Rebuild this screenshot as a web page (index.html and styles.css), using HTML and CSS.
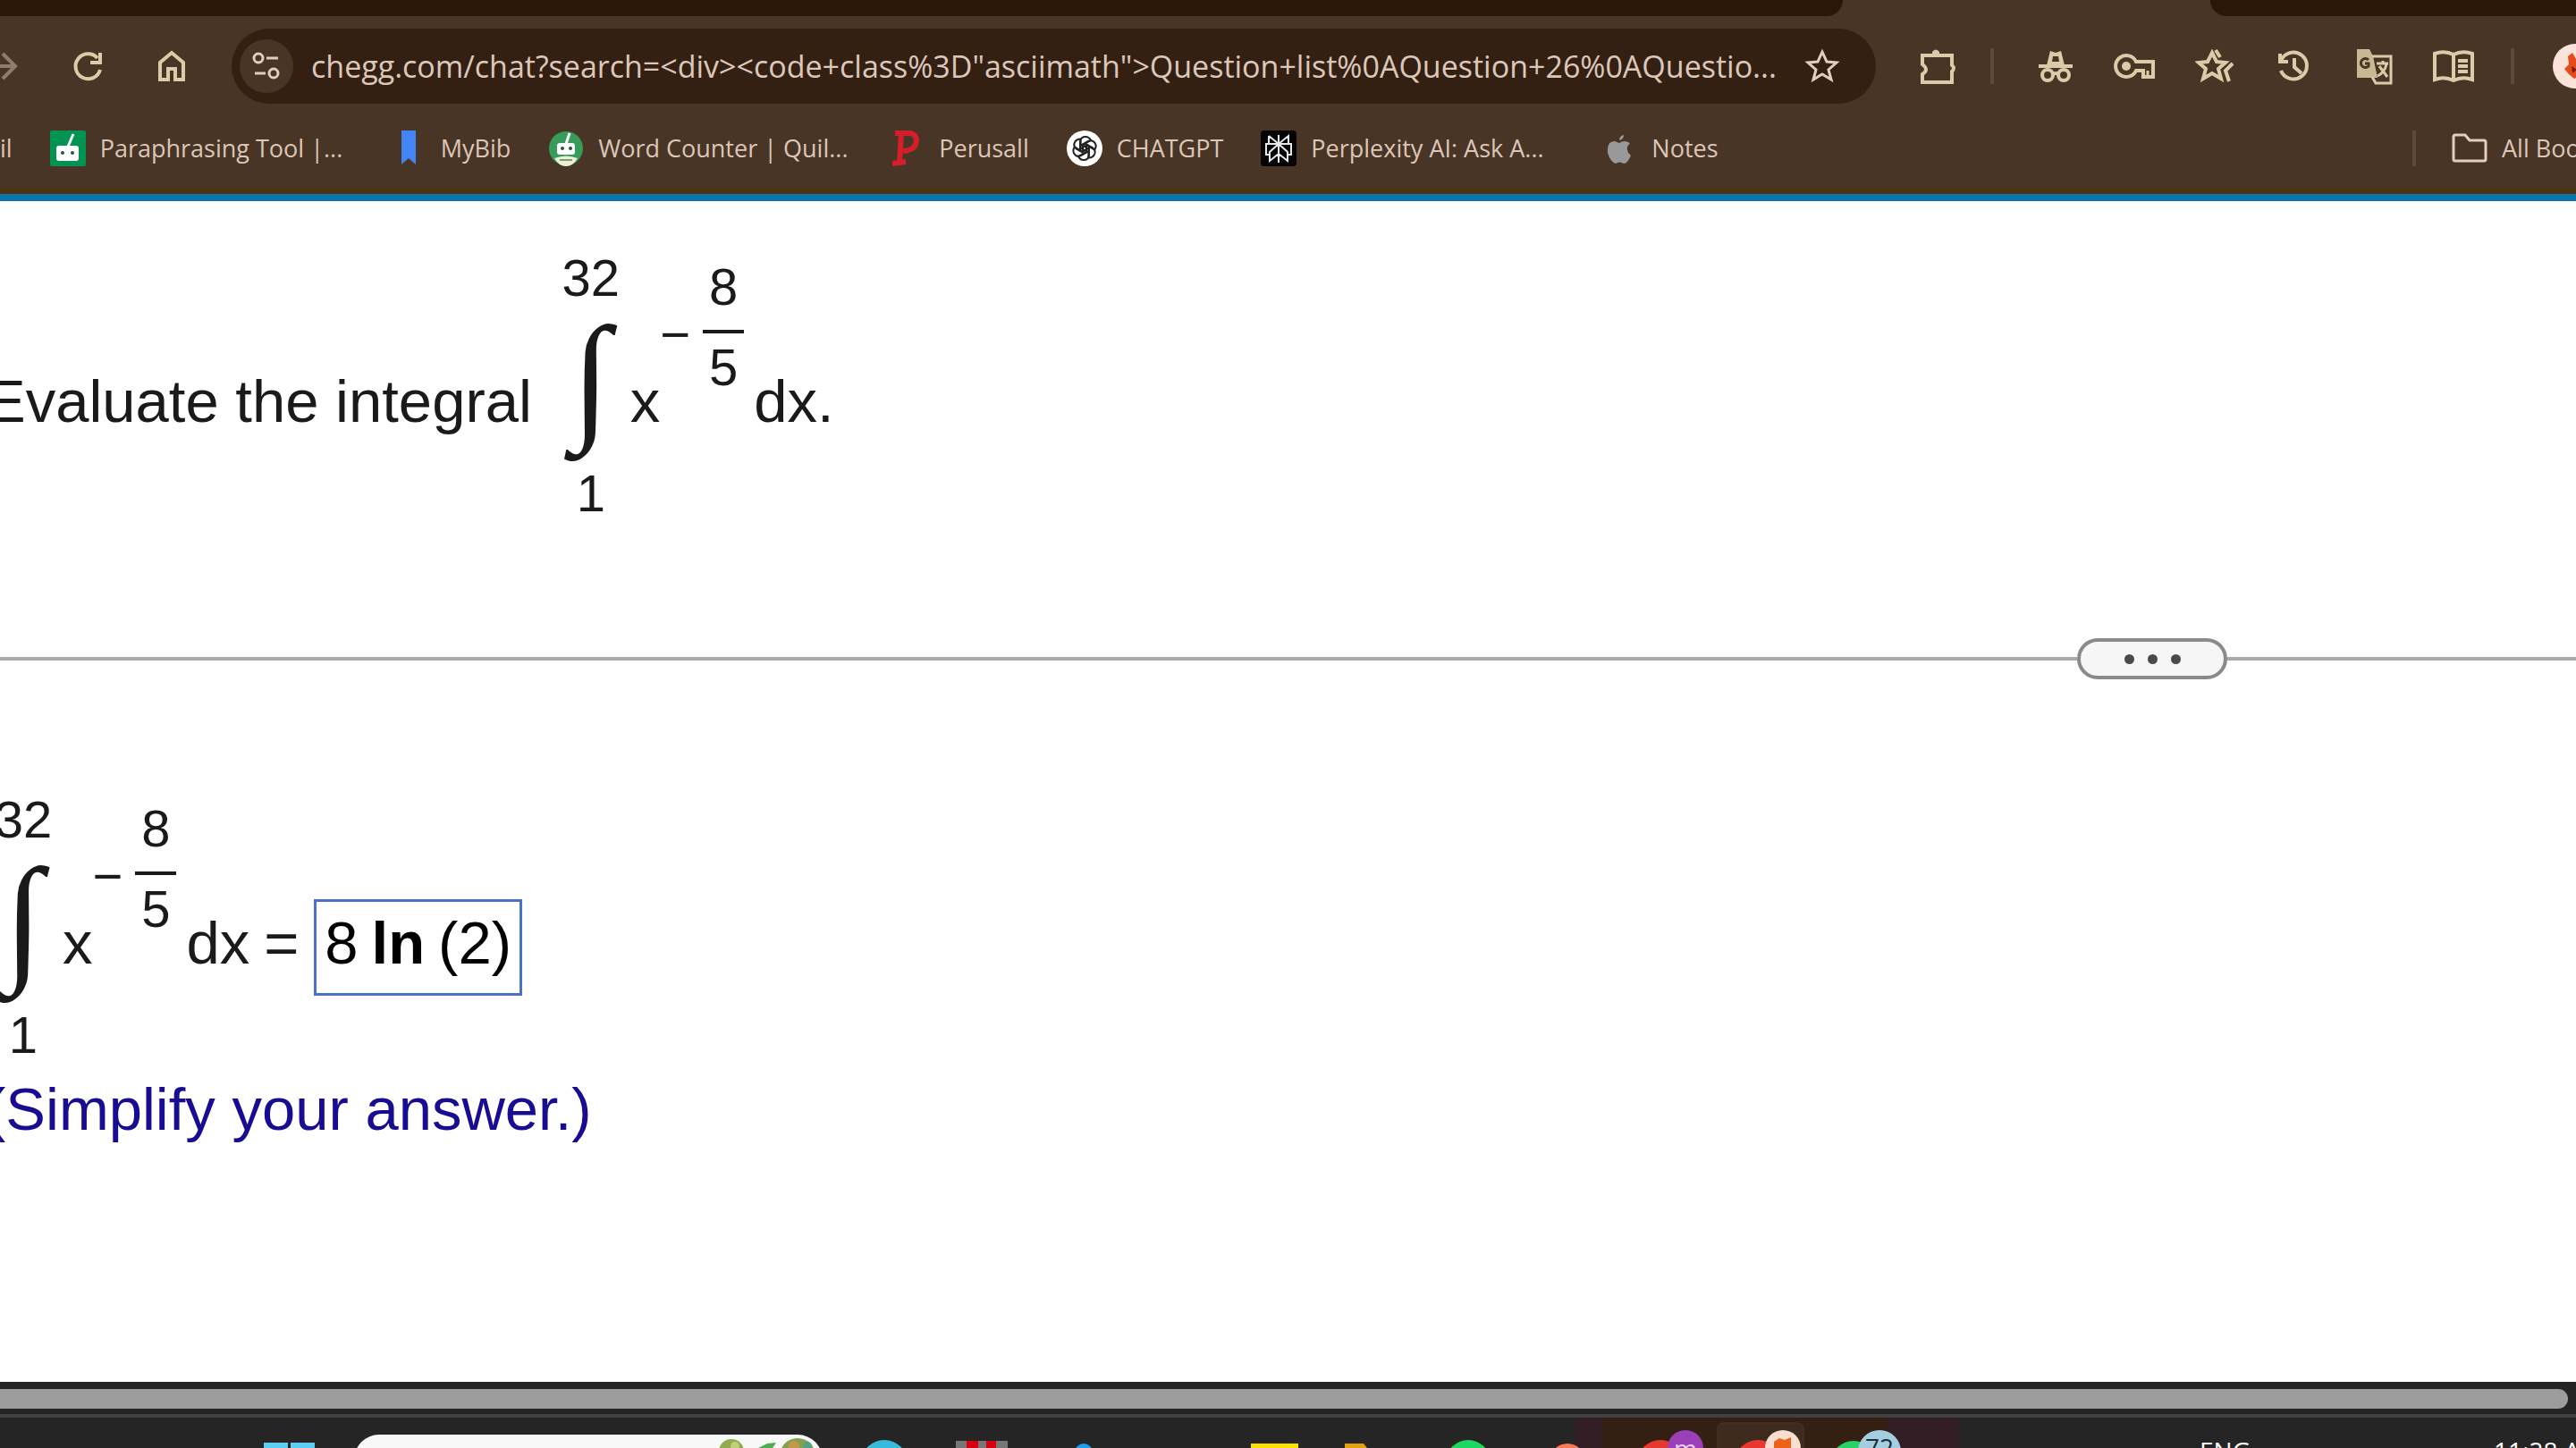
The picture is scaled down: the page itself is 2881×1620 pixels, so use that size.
FILE: index.html
```html
<!DOCTYPE html>
<html lang="en">
<head>
    <meta charset="UTF-8">
    <meta name="viewport" content="width=device-width, initial-scale=1.0">
    <title>Evaluate the integral</title>
    <link rel="stylesheet" href="styles.css">
</head>
<body>
    <header class="browser">
        <div class="tabs">
            <div class="tabs-left"></div>
            <div class="tab-active"></div>
            <div class="tabs-right"></div>
        </div>

        <div class="toolbar">
            <button type="button" class="tool forward" aria-label="Forward">
                <svg width="20" height="40" viewBox="0 0 20 40"><path d="M0 20H17M3 6L17 20L3 34" stroke="#8f7c6d"/></svg>
            </button>
            <button type="button" class="tool nav" aria-label="Reload">
                <svg width="40" height="40" viewBox="0 0 40 40"><path d="M31 11A14 14 0 1 0 34 24M34 5V16H23"/></svg>
            </button>
            <button type="button" class="tool nav" aria-label="Home">
                <svg width="40" height="40" viewBox="0 0 40 40"><path d="M7 35V16L20 5L33 16V35H24V23H16V35Z"/></svg>
            </button>

            <div class="omnibox">
                <button type="button" class="site-info" aria-label="Site information">
                    <svg width="36" height="36" viewBox="0 0 36 36"><circle cx="9" cy="9" r="5"/><path d="M18 9H31M5 26H17"/><circle cx="26" cy="26" r="5"/></svg>
                </button>
                <input type="text" class="url" aria-label="Address" value="chegg.com/chat?search=&lt;div&gt;&lt;code+class%3D&quot;asciimath&quot;&gt;Question+list%0AQuestion+26%0AQuestio...">
                <button type="button" class="bookmark-star" aria-label="Bookmark this page">
                    <svg width="40" height="40" viewBox="0 0 40 40"><path d="M20 4L25 15L36 16L27 24L30 35L20 29L10 35L13 24L4 16L15 15Z"/></svg>
                </button>
            </div>

            <div class="actions">
                <button type="button" class="tool" aria-label="Extensions">
                    <svg width="44" height="44" viewBox="0 0 44 44"><path d="M5 10H38V21Q42 24 38 28V40H5V31Q13 26 5 20Z"/><path d="M16 10V6Q20 1 24 6V10ZM38 19Q45 24 38 30Z" fill="#dccba8" stroke="none"/></svg>
                </button>
                <span class="separator first"></span>
                <button type="button" class="tool" aria-label="Incognito">
                    <svg width="40" height="40" viewBox="0 0 40 40"><path d="M1 20H39" /><path d="M10 19L14 3L20 5L26 3L30 19Z" fill="#dccba8" stroke="none"/><path d="M16 15L17 9H23L24 15Z" fill="#483526" stroke="none"/><circle cx="11" cy="30" r="6"/><circle cx="29" cy="30" r="6"/><path d="M17 29Q20 27 23 29"/></svg>
                </button>
                <button type="button" class="tool" aria-label="Passwords">
                    <svg width="48" height="40" viewBox="0 0 48 40"><path d="M25 15A12 12 0 1 0 25 25H33V32H44V15Z"/><path d="M38 25V33" stroke-width="3"/><circle cx="14" cy="20" r="5" fill="#dccba8" stroke="none"/></svg>
                </button>
                <button type="button" class="tool" aria-label="Bookmarks">
                    <svg width="44" height="44" viewBox="0 0 44 44"><path d="M19 7L24 17L34 18L26 25L29 36L19 30L9 36L12 25L4 18L14 17Z"/><path d="M23 4L28 12M42 19L34 27L38 39"/></svg>
                </button>
                <button type="button" class="tool" aria-label="History">
                    <svg width="40" height="40" viewBox="0 0 40 40"><path d="M4 6V15H13M5 14A15 15 0 1 1 5 25M20 11V21L28 28"/></svg>
                </button>
                <button type="button" class="tool" aria-label="Translate">
                    <svg width="44" height="44" viewBox="0 0 44 44"><path d="M3 3H17L21 11L26 35H3Z" fill="#c8b894" stroke="none"/><path d="M20 11H41V41H24L20 34" stroke-width="3"/><path d="M25 19H38M32 16V19M36 20Q34 29 26 33M28 22L37 34" stroke-width="3"/><path d="M16 15A5 5 0 1 0 16 22V19H12" stroke="#483526" stroke-width="3"/></svg>
                </button>
                <button type="button" class="tool" aria-label="Reading mode">
                    <svg width="48" height="40" viewBox="0 0 48 40"><path d="M24 7Q14 2 3 6V35Q14 31 24 36Q34 31 45 35V6Q34 2 24 7ZM24 7V36M29 14H40M29 20H40M29 26H40"/></svg>
                </button>
                <span class="separator last"></span>
                <span class="avatar">
                    <svg width="50" height="50" viewBox="0 0 50 50"><circle cx="25" cy="25" r="25" fill="#fbe3da" stroke="none"/><path d="M13 28L18 23L17 14L22 10L26 17L36 14L34 34L24 39L18 34Z" fill="#e64b1b" stroke="none"/><path d="M21 25L27 29L22 33Z" fill="#7a1d0c" stroke="none"/></svg>
                </span>
            </div>
        </div>

        <nav class="bookmarks">
            <a href="#" class="bookmark"><span>il</span></a>
            <a href="#" class="bookmark">
                <svg width="40" height="40" viewBox="0 0 40 40"><rect width="40" height="40" rx="2" fill="#039452"/><path d="M20 18L26 4" stroke="#fff" stroke-width="3"/><rect x="7" y="17" width="25" height="17" rx="3" fill="#fff"/><circle cx="14" cy="25" r="2" fill="#28543c"/><circle cx="25" cy="25" r="2" fill="#28543c"/></svg>
                <span class="clipped">Paraphrasing Tool |...</span>
            </a>
            <a href="#" class="bookmark">
                <svg width="40" height="40" viewBox="0 0 40 40"><path d="M12 0H28V38L20 31L12 38Z" fill="#4285f4"/></svg>
                <span>MyBib</span>
            </a>
            <a href="#" class="bookmark">
                <svg width="40" height="40" viewBox="0 0 40 40"><circle cx="20" cy="20" r="19" fill="#399b5b"/><path d="M20 15L24 3" stroke="#fff" stroke-width="3"/><rect x="10" y="14" width="20" height="13" rx="3" fill="#fff"/><circle cx="16" cy="20" r="2" fill="#28543c"/><circle cx="25" cy="20" r="2" fill="#28543c"/><path d="M7 31Q20 26 33 31Q28 40 20 40Q12 40 7 31Z" fill="#e9f0d5"/><path d="M13 33H27" stroke="#839a70" stroke-width="2"/></svg>
                <span class="clipped">Word Counter | Quil...</span>
            </a>
            <a href="#" class="bookmark">
                <svg width="40" height="40" viewBox="0 0 40 40"><path d="M7 3L17 3Q31 1 31 12Q30 22 16 23M14 3L12 36M4 37L19 35" fill="none" stroke="#d61e2b" stroke-width="6"/></svg>
                <span>Perusall</span>
            </a>
            <a href="#" class="bookmark">
                <svg width="40" height="40" viewBox="0 0 40 40"><circle cx="20" cy="20" r="20" fill="#fff"/><g fill="none" stroke="#222" stroke-width="2"><path id="petal" d="M15 23V12Q16 7 21 7Q25 7 27 11L18 16V23"/><use href="#petal" transform="rotate(60 20 20)"/><use href="#petal" transform="rotate(120 20 20)"/><use href="#petal" transform="rotate(180 20 20)"/><use href="#petal" transform="rotate(240 20 20)"/><use href="#petal" transform="rotate(300 20 20)"/></g></svg>
                <span>CHATGPT</span>
            </a>
            <a href="#" class="bookmark">
                <svg width="40" height="40" viewBox="0 0 40 40"><rect width="40" height="40" rx="4" fill="#060303"/><path d="M20 5V36M9 6L20 15L31 6V15M9 6V15M20 15H6V27H10M20 15H34V27H30M20 15L10 24V34L20 26L30 34V24L20 15" fill="none" stroke="#e4e7ee" stroke-width="2"/></svg>
                <span class="clipped">Perplexity AI: Ask A...</span>
            </a>
            <a href="#" class="bookmark">
                <svg width="40" height="40" viewBox="0 0 40 40"><path d="M20 14Q25 10 32 14Q25 21 33 28Q29 37 25 37Q20 34 16 37Q10 35 7 25Q6 12 15 12Z" fill="#999"/><path d="M20 11Q20 6 25 5Q25 10 20 11Z" fill="#999"/></svg>
                <span>Notes</span>
            </a>
            <span class="spacer"></span>
            <span class="separator"></span>
            <a href="#" class="bookmark all">
                <svg width="40" height="40" viewBox="0 0 40 40"><path d="M2 7Q2 5 4 5H15L20 11H36Q38 11 38 13V32Q38 34 36 34H4Q2 34 2 32Z" fill="none" stroke="#e2cdbf" stroke-width="3"/></svg>
                <span>All Bookmarks</span>
            </a>
        </nav>
    </header>

    <main class="page">
        <div class="math question">
            <span class="line">Evaluate the integral</span>
            <span class="integral"><span>32</span><span class="sign">∫</span><span>1</span></span>
            <span class="line">x</span>
            <span class="exponent">
                <span class="minus">−</span>
                <span class="fraction"><span class="top">8</span><span class="bottom">5</span></span>
            </span>
            <span class="line">dx.</span>
        </div>

        <div class="divider">
            <span class="rule"></span>
            <button type="button" class="more" aria-label="Show more"><i></i><i></i><i></i></button>
            <span class="rule end"></span>
        </div>

        <div class="math solution">
            <span class="integral"><span>32</span><span class="sign">∫</span><span>1</span></span>
            <span class="line">x</span>
            <span class="exponent">
                <span class="minus">−</span>
                <span class="fraction"><span class="top">8</span><span class="bottom">5</span></span>
            </span>
            <span class="line">dx</span>
            <span class="line equals">=</span>
            <span class="answer"><span>8</span><b>ln</b><span>(2)</span></span>
        </div>
        <p class="hint">(Simplify your answer.)</p>
    </main>

    <div class="scrollbar"><div class="thumb"></div></div>

    <footer class="taskbar">
        <svg class="start" width="57" height="34" viewBox="0 0 57 34"><path d="M0 28H27V34H0ZM30 28H57V34H30Z" fill="#5ccdf3"/></svg>
        <div class="search">
            <svg width="120" height="16" viewBox="0 0 120 16"><circle cx="18" cy="19" r="14" fill="#93ab50"/><circle cx="22" cy="13" r="5" fill="#c2cf7a"/><path d="M48 15L58 10L68 9L64 15Z" fill="#4bae4f"/><circle cx="92" cy="24" r="20" fill="#86a04d"/><circle cx="88" cy="13" r="6" fill="#c39a4a"/><circle cx="103" cy="13" r="5" fill="#55a08a"/></svg>
        </div>
        <div class="apps">
            <svg class="app" viewBox="0 0 109 34"><circle cx="55" cy="51" r="26" fill="#35bcdc"/></svg>
            <svg class="app" viewBox="0 0 109 34"><path d="M26 26H84V34H26Z" fill="#777"/><path d="M38 26H51V34H38ZM60 26H71V34H60Z" fill="#d8000f"/></svg>
            <svg class="app" viewBox="0 0 109 34"><circle cx="60" cy="39" r="10" fill="#1e9df1"/></svg>
            <svg class="app" viewBox="0 0 109 34"></svg>
            <svg class="app" viewBox="0 0 109 34"><path d="M29 29H82V34H29Z" fill="#fbe000"/></svg>
            <svg class="app" viewBox="0 0 109 34"><path d="M25 29H46L50 34H25Z" fill="#e3a10c"/></svg>
            <svg class="app" viewBox="0 0 109 34"><circle cx="54" cy="50" r="25" fill="#1ed760"/></svg>
            <svg class="app" viewBox="0 0 109 34"><path d="M64 0H109V34H64Z" fill="#341e26"/><path d="M95 0H109V34H95Z" fill="#342012"/><circle cx="56" cy="49" r="20" fill="#f77b55"/></svg>
            <svg class="app" viewBox="0 0 109 34"><path d="M0 0H109V34H0Z" fill="#342012"/><circle cx="51" cy="51" r="26" fill="#e8382f"/><circle cx="79" cy="34" r="20" fill="#9b3fb8"/><text x="79" y="45" class="badge-text" fill="#ecd0f2">m</text></svg>
            <svg class="app" viewBox="0 0 109 34"><path d="M0 0H109V34H0Z" fill="#342012"/><rect x="6" y="6" width="96" height="60" rx="6" fill="#3f2b1e" stroke="#4a3628"/><circle cx="51" cy="51" r="26" fill="#e8382f"/><circle cx="79" cy="34" r="20" fill="#f9ded2"/><path d="M69 34V27L75 23L81 25L88 22V34Z" fill="#ee6218"/></svg>
            <svg class="app" viewBox="0 0 109 34"><path d="M0 0H109V34H0Z" fill="#341e26"/><path d="M0 0H87V34H0Z" fill="#342012"/><circle cx="49" cy="52" r="26" fill="#25d366"/><circle cx="78" cy="38" r="24" fill="#a5cfe0"/><text x="78" y="44" class="badge-text" fill="#17303a">72</text></svg>
            <svg class="app" viewBox="0 0 109 34"><path d="M0 0H58V34H0Z" fill="#341e26"/></svg>
        </div>
        <div class="tray">
            <span class="language">ENG</span>
            <span class="clock">11:28 AM</span>
        </div>
    </footer>
</body>
</html>
```

FILE: styles.css
```css
* {
    box-sizing: border-box;
}
body {
    margin: 0;
    height: 100vh;
    display: flex;
    flex-direction: column;
    overflow: hidden;
    background: #fff;
    color: #1a1a1a;
    font-family: "Liberation Sans", Arial, sans-serif;
}
button {
    padding: 0;
    border: none;
    background: none;
    cursor: pointer;
}
svg {
    display: block;
    flex: none;
}

/* browser window */
.browser {
    background: #483526;
    border-bottom: 8px solid #0877ad;
    font-family: "Open Sans", "Noto Sans", sans-serif;
    color: #dcc6b8;
}
.tabs {
    display: flex;
    height: 18px;
}
.tabs-left, .tabs-right {
    background: #2b1708;
}
.tabs-left {
    flex: 1;
    border-bottom-right-radius: 20px;
}
.tab-active {
    width: 411px;
}
.tabs-right {
    width: 409px;
    border-bottom-left-radius: 20px;
}
.toolbar {
    display: flex;
    align-items: center;
    padding-top: 14px;
}
.toolbar svg {
    fill: none;
    stroke: #dccba8;
    stroke-width: 4;
}
.tool {
    width: 89px;
    height: 84px;
    display: flex;
    align-items: center;
    justify-content: center;
    flex: none;
}
.forward {
    width: 51px;
    justify-content: flex-start;
}
.nav {
    width: 94px;
}
.omnibox {
    flex: 1;
    display: flex;
    align-items: center;
    height: 84px;
    margin-left: 20px;
    padding: 0 40px 0 9px;
    border-radius: 42px;
    background: #342013;
}
.site-info {
    width: 60px;
    height: 60px;
    display: flex;
    align-items: center;
    justify-content: center;
    border-radius: 50%;
    background: #483526;
}
.omnibox svg {
    stroke: #e2cdbf;
    stroke-width: 3;
}
.url {
    flex: 1;
    min-width: 0;
    margin-left: 20px;
    padding: 0;
    border: none;
    outline: none;
    background: none;
    color: #dcc8ba;
    font-family: inherit;
    font-size: 34px;
}
.actions {
    display: flex;
    align-items: center;
    padding-left: 24px;
}
.separator {
    flex: none;
    width: 4px;
    height: 40px;
    background: #5e4a3b;
}
.separator.first {
    margin: 0 24px 0 15px;
}
.separator.last {
    margin: 0 43px 0 20px;
}
.avatar {
    width: 26px;
    overflow: hidden;
}
.bookmarks {
    display: flex;
    align-items: center;
    height: 101px;
    padding-top: 4px;
    border-bottom: 6px solid #4d340e;
    font-size: 27px;
}
.bookmark {
    display: flex;
    align-items: center;
    gap: 16px;
    margin-right: 42px;
    color: inherit;
    text-decoration: none;
    white-space: nowrap;
}
.clipped {
    width: 283px;
}
.spacer {
    flex: 1;
}
.all {
    width: 139px;
    margin: 0 0 0 40px;
    overflow: hidden;
}

/* exercise */
.page {
    flex: 1;
    padding-top: 54px;
    overflow: hidden;
    font-size: 67px;
    line-height: 80px;
}
.math {
    display: flex;
    align-items: flex-start;
    white-space: pre;
}
.question {
    margin-left: -16px;
}
.solution {
    margin: 125px 0 0 -6px;
}
.line {
    margin-top: 130px;
}
.question .integral {
    margin-left: 34px;
}
.integral {
    display: flex;
    flex-direction: column;
    align-items: center;
    width: 64px;
    margin-right: 12px;
    font-size: 58px;
    line-height: 64px;
}
.sign {
    height: 177px;
    line-height: 157px;
    font-family: "Liberation Serif", "Times New Roman", serif;
    font-size: 157px;
}
.exponent {
    display: flex;
    align-items: center;
    gap: 14px;
    margin: 10px 11px 0 0;
    font-size: 58px;
    line-height: 64px;
}
.minus {
    padding-top: 16px;
}
.fraction {
    display: flex;
    flex-direction: column;
    width: 46px;
    text-align: center;
}
.top {
    padding-bottom: 16px;
    border-bottom: 4px solid #1a1a1a;
}
.bottom {
    padding-top: 6px;
}
.equals {
    margin-left: 16px;
    margin-right: 17px;
}
.answer {
    display: flex;
    gap: 15px;
    margin-top: 121px;
    padding: 6px 9px 16px;
    border: 3px solid #4a72c8;
    color: #000;
}
.hint {
    margin: 11px 0 0 -16px;
    color: #170c92;
}
.divider {
    display: flex;
    align-items: center;
    margin-top: 130px;
}
.rule {
    flex: 1;
    height: 4px;
    background: #a9a9a9;
}
.rule.end {
    flex: none;
    width: 390px;
}
.more {
    display: flex;
    align-items: center;
    justify-content: center;
    gap: 15px;
    width: 168px;
    height: 46px;
    border: 4px solid #8a8a8a;
    border-radius: 23px;
    background: #f6f6f6;
}
.more i {
    width: 11px;
    height: 11px;
    border-radius: 50%;
    background: #4a4a4a;
}

/* bottom of the screen */
.scrollbar {
    padding: 8px 9px 6px 0;
    background: #242424;
    border-bottom: 4px solid #404040;
}
.thumb {
    height: 22px;
    border-radius: 0 11px 11px 0;
    background: #9d9d9d;
}
.taskbar {
    display: flex;
    align-items: flex-start;
    height: 34px;
    padding-left: 295px;
    overflow: hidden;
    background: #252525;
}
.search {
    display: flex;
    justify-content: flex-end;
    width: 524px;
    height: 80px;
    margin: 19px 14px 0 44px;
    border-radius: 28px;
    background: #f8f8f8;
}
.apps {
    display: flex;
    flex: 1;
}
.app {
    width: 109px;
    height: 34px;
}
.badge-text {
    font-family: "Open Sans", sans-serif;
    font-size: 28px;
    text-anchor: middle;
}
.tray {
    display: flex;
    gap: 272px;
    width: 421px;
    padding-top: 18px;
    color: #fff;
    font-family: "Open Sans", sans-serif;
    font-size: 28px;
    line-height: 38px;
    white-space: nowrap;
}
```
